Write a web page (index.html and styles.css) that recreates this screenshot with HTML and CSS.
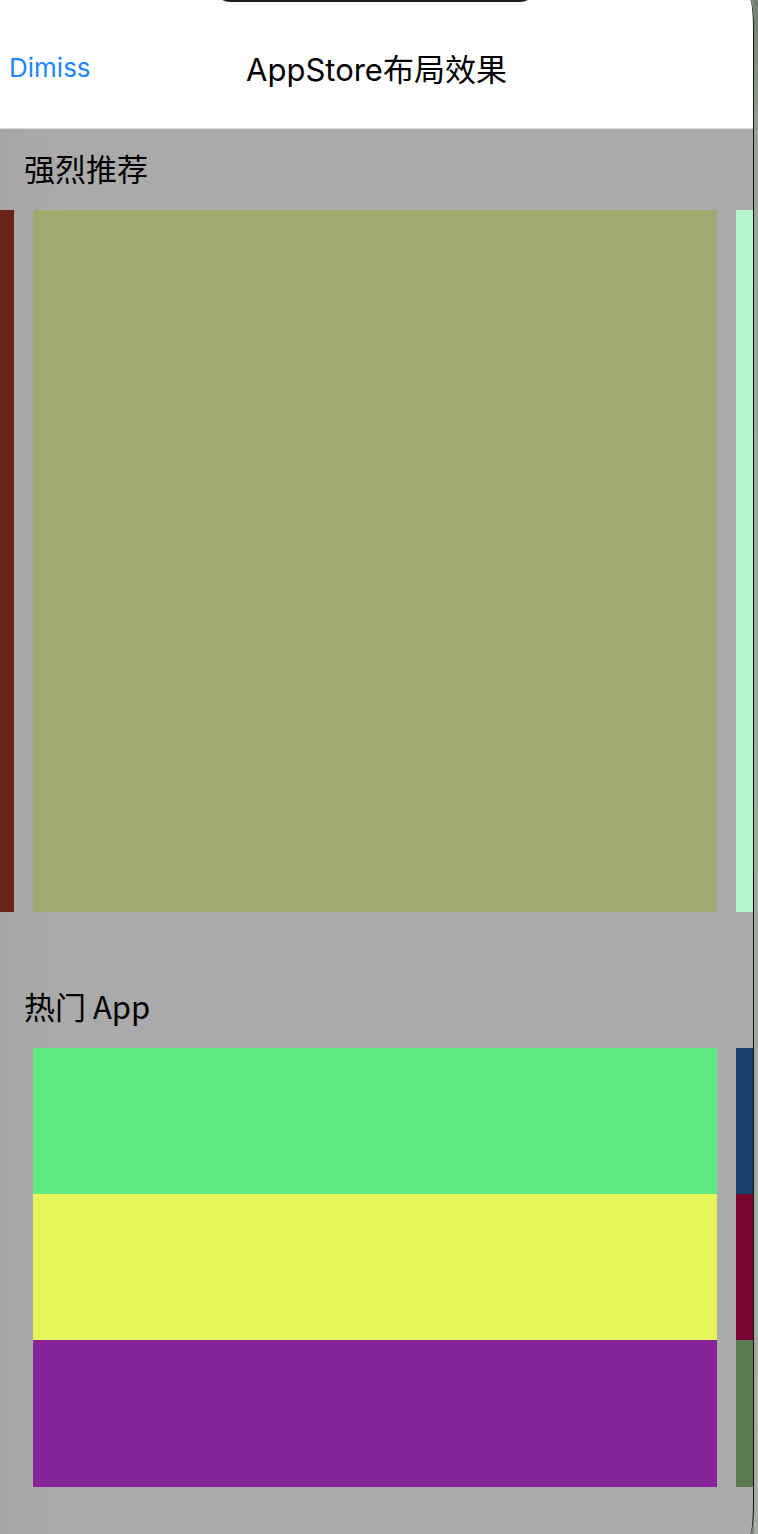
FILE: index.html
```html
<!DOCTYPE html>
<html lang="zh-CN">
<head>
<meta charset="utf-8">
<title>AppStore布局效果</title>
<link rel="stylesheet" href="styles.css">
</head>
<body>
<div class="device">
  <div class="screen">
    <div class="notch"></div>
    <header class="navbar">
      <a class="nav-btn">Dimiss</a>
      <h1 class="nav-title">AppStore布局效果</h1>
      <span class="nav-spacer"></span>
    </header>
    <main class="content">
      <section class="section featured">
        <h2 class="section-title">强烈推荐</h2>
        <div class="carousel">
          <div class="card c-red"></div>
          <div class="card c-olive"></div>
          <div class="card c-mint"></div>
        </div>
      </section>
      <section class="section hot">
        <h2 class="section-title">热门 App</h2>
        <div class="pager">
          <div class="page">
            <div class="app-row c-green"></div>
            <div class="app-row c-yellow"></div>
            <div class="app-row c-purple tall"></div>
          </div>
          <div class="page">
            <div class="app-row c-navy"></div>
            <div class="app-row c-maroon"></div>
            <div class="app-row c-dkgreen tall"></div>
          </div>
        </div>
      </section>
    </main>
  </div>
  <div class="edge"></div>
</div>
</body>
</html>
```

FILE: styles.css
```css
html, body {
  margin: 0;
  padding: 0;
}

body {
  width: 758px;
  height: 1534px;
  overflow: hidden;
  background: #7f8b7c;
  font-family: Inter, "Noto Sans CJK SC", sans-serif;
}

.device {
  display: flex;
  height: 1534px;
}

.screen {
  position: relative;
  width: 753px;
  height: 1534px;
  flex: 0 0 auto;
  background: linear-gradient(to right, #a6a6a6 0px, #aaaaaa 60px, #aaaaaa 100%);
  border-right: 1px solid #111;
  border-top-right-radius: 4px 36px;
  border-bottom-right-radius: 4px 32px;
  overflow: hidden;
}

.edge {
  flex: 1;
  background: linear-gradient(to bottom, #6f806c 0%, #9aa598 10%, #a7aea6 100%);
}

.notch {
  position: absolute;
  left: 214px;
  top: -14px;
  width: 322px;
  height: 16px;
  background: #1c1c1c;
  border-radius: 0 0 22px 22px;
}

.navbar {
  height: 129px;
  box-sizing: border-box;
  padding-top: 6px;
  background: #ffffff;
  border-bottom: 1px solid #dcdcdc;
  display: grid;
  grid-template-columns: 1fr auto 1fr;
  align-items: center;
}

.nav-btn {
  padding-left: 9px;
  font-size: 26px;
  color: #1f86fb;
  text-decoration: none;
}

.nav-title {
  margin: 0;
  font-size: 31px;
  font-weight: 400;
  color: #000;
  letter-spacing: 0;
}

.content {
  padding-top: 19px;
}

.section-title {
  margin: 0 0 22px;
  padding-left: 24px;
  font-family: "Noto Sans CJK SC", sans-serif;
  font-size: 31px;
  line-height: 40px;
  font-weight: 400;
  color: #000;
}

.featured {
  margin-bottom: 74px;
}

.carousel {
  display: flex;
  justify-content: center;
  gap: 19px;
  padding-right: 3px;
  overflow: hidden;
}

.card {
  flex: 0 0 684px;
  height: 702px;
}

.pager {
  display: flex;
  gap: 19px;
  padding-left: 33px;
  overflow: hidden;
}

.page {
  flex: 0 0 684px;
  display: flex;
  flex-direction: column;
}

.app-row {
  height: 146px;
}

.app-row.tall {
  height: 147px;
}

.c-red { background: #6a2219; }
.c-olive { background: #a1a970; }
.c-mint { background: #b4f5c9; }
.c-green { background: #5eea7e; }
.c-yellow { background: #e6f65a; }
.c-purple { background: #872497; }
.c-navy { background: #17416b; }
.c-maroon { background: #7a0530; }
.c-dkgreen { background: #5b7b53; }
```
